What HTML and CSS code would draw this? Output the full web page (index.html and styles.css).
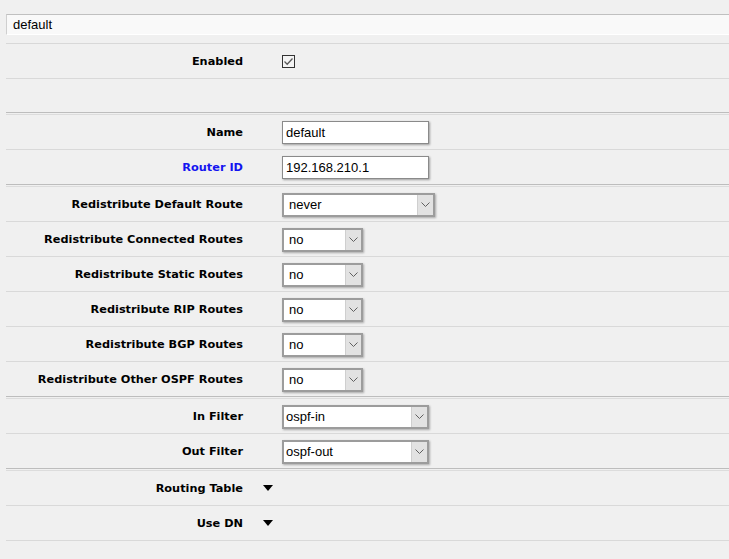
FILE: index.html
```html
<!DOCTYPE html>
<html>
<head>
<meta charset="utf-8">
<link rel="stylesheet" href="styles.css">
</head>
<body>
<div class="top">
  <div class="namebar">default</div>
</div>
<div class="form">
  <div class="row">
    <div class="label">Enabled</div>
    <div class="ctl"><span class="check"><svg width="11" height="11" viewBox="0 0 11 11"><path d="M1.5 5.5 L4.2 8.2 L9.5 2.5" fill="none" stroke="#5a5a5a" stroke-width="1.3"/></svg></span></div>
  </div>
  <div class="row empty nob"></div>
  <div class="divider"></div>
  <div class="row">
    <div class="label">Name</div>
    <div class="ctl"><div class="input">default</div></div>
  </div>
  <div class="row nob">
    <div class="label blue">Router ID</div>
    <div class="ctl"><div class="input">192.168.210.1</div></div>
  </div>
  <div class="divider"></div>
  <div class="row">
    <div class="label">Redistribute Default Route</div>
    <div class="ctl"><div class="select w153"><span class="val">never</span><span class="arrow"><svg width="9" height="5" viewBox="0 0 9 5"><path d="M0.5 0.5 L4.5 4.5 L8.5 0.5" fill="none" stroke="#606060" stroke-width="1"/></svg></span></div></div>
  </div>
  <div class="row">
    <div class="label">Redistribute Connected Routes</div>
    <div class="ctl"><div class="select w81"><span class="val">no</span><span class="arrow"><svg width="9" height="5" viewBox="0 0 9 5"><path d="M0.5 0.5 L4.5 4.5 L8.5 0.5" fill="none" stroke="#606060" stroke-width="1"/></svg></span></div></div>
  </div>
  <div class="row">
    <div class="label">Redistribute Static Routes</div>
    <div class="ctl"><div class="select w81"><span class="val">no</span><span class="arrow"><svg width="9" height="5" viewBox="0 0 9 5"><path d="M0.5 0.5 L4.5 4.5 L8.5 0.5" fill="none" stroke="#606060" stroke-width="1"/></svg></span></div></div>
  </div>
  <div class="row">
    <div class="label">Redistribute RIP Routes</div>
    <div class="ctl"><div class="select w81"><span class="val">no</span><span class="arrow"><svg width="9" height="5" viewBox="0 0 9 5"><path d="M0.5 0.5 L4.5 4.5 L8.5 0.5" fill="none" stroke="#606060" stroke-width="1"/></svg></span></div></div>
  </div>
  <div class="row">
    <div class="label">Redistribute BGP Routes</div>
    <div class="ctl"><div class="select w81"><span class="val">no</span><span class="arrow"><svg width="9" height="5" viewBox="0 0 9 5"><path d="M0.5 0.5 L4.5 4.5 L8.5 0.5" fill="none" stroke="#606060" stroke-width="1"/></svg></span></div></div>
  </div>
  <div class="row nob">
    <div class="label">Redistribute Other OSPF Routes</div>
    <div class="ctl"><div class="select w81"><span class="val">no</span><span class="arrow"><svg width="9" height="5" viewBox="0 0 9 5"><path d="M0.5 0.5 L4.5 4.5 L8.5 0.5" fill="none" stroke="#606060" stroke-width="1"/></svg></span></div></div>
  </div>
  <div class="divider"></div>
  <div class="row">
    <div class="label">In Filter</div>
    <div class="ctl"><div class="select w147"><span class="val tight">ospf-in</span><span class="arrow"><svg width="9" height="5" viewBox="0 0 9 5"><path d="M0.5 0.5 L4.5 4.5 L8.5 0.5" fill="none" stroke="#606060" stroke-width="1"/></svg></span></div></div>
  </div>
  <div class="row nob">
    <div class="label">Out Filter</div>
    <div class="ctl"><div class="select w147"><span class="val tight">ospf-out</span><span class="arrow"><svg width="9" height="5" viewBox="0 0 9 5"><path d="M0.5 0.5 L4.5 4.5 L8.5 0.5" fill="none" stroke="#606060" stroke-width="1"/></svg></span></div></div>
  </div>
  <div class="divider"></div>
  <div class="row">
    <div class="label">Routing Table</div>
    <div class="ctl tri-ctl"><span class="tri"></span></div>
  </div>
  <div class="row">
    <div class="label">Use DN</div>
    <div class="ctl tri-ctl"><span class="tri"></span></div>
  </div>
</div>
</body>
</html>
```
FILE: styles.css
```css
html, body {
  margin: 0;
  padding: 0;
  background: #f0f0f0;
}
body {
  font-family: "DejaVu Sans", Verdana, sans-serif;
  color: #000;
}
.top {
  padding-top: 14px;
  margin-left: 6px;
  border-bottom: 1px solid #d8d8d8;
  padding-bottom: 8px;
}
.namebar {
  height: 19px;
  border-top: 1px solid #c0c0c0;
  border-left: 1px solid #cfcfcf;
  border-bottom: 1px solid #ffffff;
  background: #f9f9f9;
  font-family: "Liberation Sans", Arial, sans-serif;
  font-size: 13px;
  line-height: 20px;
  padding-left: 6px;
}
.form {
  margin-left: 6px;
}
.row {
  display: flex;
  align-items: center;
  height: 34px;
  border-bottom: 1px solid #d9d9d9;
}
.row.nob {
  border-bottom: none;
}
.row.empty {
  height: 33px;
}
.divider {
  height: 1px;
  border-top: 1px solid #bdbdbd;
  border-bottom: 1px solid #dcdcdc;
}
.label {
  width: 237px;
  text-align: right;
  font-weight: bold;
  font-size: 11.3px;
  padding-top: 1px;
  color: #000;
}
.label.blue {
  color: #1414f0;
}
.ctl {
  margin-left: 39px;
  display: flex;
  align-items: center;
}
.check {
  width: 11px;
  height: 11px;
  border: 1px solid #333;
  background: #f4f4f4;
  display: flex;
  align-items: center;
  justify-content: center;
  margin-top: 1px;
}
.input {
  width: 142px;
  height: 21px;
  border: 1px solid #8a8a8a;
  background: #fff;
  box-shadow: 1px 1px 2px rgba(0,0,0,0.35);
  font-family: "Liberation Sans", Arial, sans-serif;
  font-size: 13px;
  line-height: 21px;
  padding-left: 3px;
  margin-top: 1px;
}
.select {
  display: flex;
  height: 20px;
  border: 2px solid #9c9c9c;
  background: #fff;
  box-shadow: 1px 1px 2px rgba(0,0,0,0.3);
  font-family: "Liberation Sans", Arial, sans-serif;
  font-size: 13px;
  margin-top: 1px;
}
.select.w153 { width: 149px; }
.select.w81 { width: 77px; }
.select.w147 { width: 143px; }
.val {
  flex: 1;
  line-height: 20px;
  padding-left: 5px;
}
.val.tight {
  padding-left: 2px;
}
.arrow {
  width: 15px;
  border-left: 1px solid #cfcfcf;
  background: #e2e2e2;
  display: flex;
  align-items: center;
  justify-content: center;
}
.tri-ctl {
  margin-left: 20px;
}
.tri {
  width: 0;
  height: 0;
  border-left: 5px solid transparent;
  border-right: 5px solid transparent;
  border-top: 6px solid #000;
  margin-top: -1px;
}
```
